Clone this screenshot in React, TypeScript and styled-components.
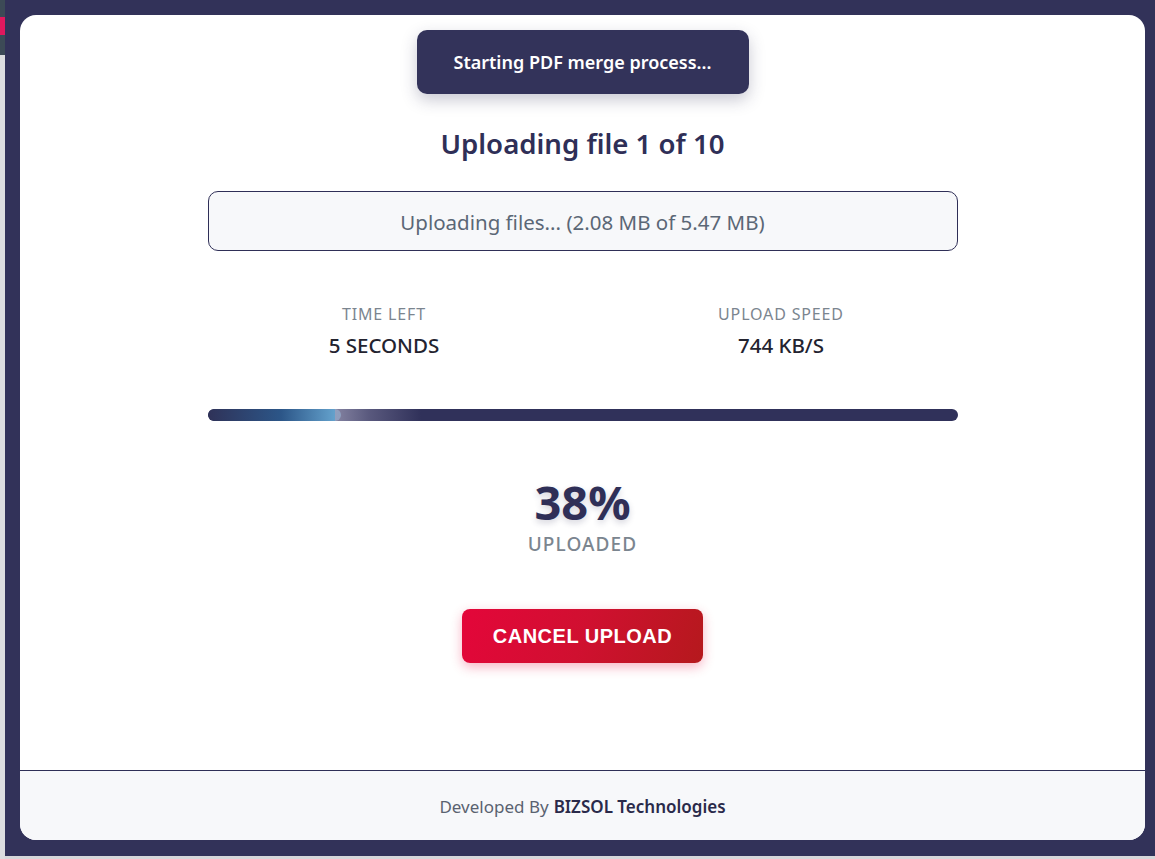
import React from "react";
import styled, { createGlobalStyle } from "styled-components";

const Global = createGlobalStyle`
  html, body { margin: 0; padding: 0; }
  body {
    width: 1155px;
    height: 859px;
    overflow: hidden;
    background: #d6d7d9;
    font-family: "Noto Sans", "Open Sans", sans-serif;
  }
`;

const Screen = styled.div`
  display: flex;
  width: 1155px;
  height: 859px;
`;

const SideStrip = styled.div`
  width: 5px;
  flex: none;
  display: flex;
  flex-direction: column;
  background: #dcdddf;
`;

const SideTop = styled.div`
  height: 55px;
  background: #3c4a56;
  display: flex;
  flex-direction: column;
  padding-top: 17px;
  box-sizing: border-box;
`;

const SideBadge = styled.div`
  height: 18px;
  background: #e0185e;
`;

const Overlay = styled.div`
  flex: 1;
  height: 856px;
  background: #323259;
  padding: 15px 10px 0 15px;
  box-sizing: border-box;
`;

const Modal = styled.div`
  width: 1125px;
  height: 825px;
  background: #ffffff;
  border-radius: 16px;
  overflow: hidden;
  display: flex;
  flex-direction: column;
`;

const Body = styled.div`
  flex: 1;
  display: flex;
  flex-direction: column;
  align-items: center;
  padding-top: 15px;
`;

const Toast = styled.div`
  width: 332px;
  height: 64px;
  border-radius: 10px;
  background: #33335a;
  color: #ffffff;
  font-size: 18px;
  font-weight: 600;
  display: flex;
  align-items: center;
  justify-content: center;
  box-shadow: 0 6px 16px rgba(40, 40, 80, 0.25);
`;

const Title = styled.h2`
  margin: 31px 0 0;
  font-size: 27.6px;
  line-height: 36px;
  font-weight: 600;
  color: #2f2f57;
`;

const StatusBox = styled.div`
  margin-top: 30px;
  width: 750px;
  height: 60px;
  box-sizing: border-box;
  border: 1px solid #2f2f57;
  border-radius: 10px;
  background: #f7f8fa;
  color: #5b6776;
  font-size: 20.5px;
  padding-top: 1px;
  display: flex;
  align-items: center;
  justify-content: center;
`;

const Stats = styled.div`
  margin-top: 53px;
  display: flex;
  justify-content: center;
`;

const Stat = styled.div`
  width: 397px;
  display: flex;
  flex-direction: column;
  align-items: center;
`;

const StatLabel = styled.div`
  font-size: 16px;
  line-height: 20px;
  letter-spacing: 0.85px;
  color: #7b858f;
  text-transform: uppercase;
`;

const StatValue = styled.div`
  margin-top: 9px;
  font-size: 20.5px;
  line-height: 24px;
  font-weight: 500;
  color: #23232f;
`;

const Track = styled.div`
  margin-top: 52px;
  width: 750px;
  height: 12px;
  border-radius: 6px;
  background: #30315a;
  display: flex;
  overflow: hidden;
`;

const Fill = styled.div`
  height: 100%;
  border-radius: 6px;
  background: linear-gradient(90deg, #2f3258 0%, #2c5688 55%, #6aaad4 100%);
  flex: none;
`;

const Shine = styled.div`
  height: 100%;
  margin-left: -6px;
  background: linear-gradient(90deg, rgba(160, 158, 185, 0.75) 0%, rgba(130, 128, 160, 0.5) 40%, rgba(48, 49, 90, 0) 100%);
  flex: none;
`;

const Percent = styled.div`
  margin-top: 59px;
  font-size: 47px;
  line-height: 44px;
  font-weight: 700;
  color: #2f2f57;
  text-shadow: 0 3px 6px rgba(47, 47, 87, 0.2);
`;

const PercentLabel = styled.div`
  margin-top: 8px;
  font-size: 19px;
  line-height: 24px;
  letter-spacing: 1.1px;
  font-weight: 500;
  color: #7b858f;
`;

const CancelButton = styled.button`
  margin-top: 53px;
  width: 241px;
  height: 54px;
  border: none;
  border-radius: 8px;
  background: linear-gradient(110deg, #e4063a 0%, #d01030 50%, #b5191d 100%);
  color: #ffffff;
  font-family: "Liberation Sans", Arial, sans-serif;
  font-weight: 700;
  font-size: 20px;
  letter-spacing: 0.5px;
  box-shadow: 0 4px 12px rgba(228, 6, 58, 0.3);
  cursor: pointer;
`;

const Footer = styled.div`
  height: 70px;
  flex: none;
  border-top: 1px solid #2f2f57;
  background: #f7f8fa;
  display: flex;
  align-items: center;
  justify-content: center;
  padding-top: 2px;
  box-sizing: border-box;
  font-size: 17px;
  color: #5a6270;
`;

const Brand = styled.span`
  font-weight: 600;
  color: #2a2a4a;
  margin-left: 5px;
`;

export default function App() {
  const fillPx = 133;
  return (
    <>
      <Global />
      <Screen>
        <SideStrip>
          <SideTop>
            <SideBadge />
          </SideTop>
        </SideStrip>
        <Overlay>
          <Modal>
            <Body>
              <Toast>Starting PDF merge process...</Toast>
              <Title>Uploading file 1 of 10</Title>
              <StatusBox>Uploading files... (2.08 MB of 5.47 MB)</StatusBox>
              <Stats>
                <Stat>
                  <StatLabel>Time Left</StatLabel>
                  <StatValue>5 SECONDS</StatValue>
                </Stat>
                <Stat>
                  <StatLabel>Upload Speed</StatLabel>
                  <StatValue>744 KB/S</StatValue>
                </Stat>
              </Stats>
              <Track>
                <Fill style={{ width: fillPx }} />
                <Shine style={{ width: 86 }} />
              </Track>
              <Percent>38%</Percent>
              <PercentLabel>UPLOADED</PercentLabel>
              <CancelButton>CANCEL UPLOAD</CancelButton>
            </Body>
            <Footer>
              Developed By<Brand>BIZSOL Technologies</Brand>
            </Footer>
          </Modal>
        </Overlay>
      </Screen>
    </>
  );
}
